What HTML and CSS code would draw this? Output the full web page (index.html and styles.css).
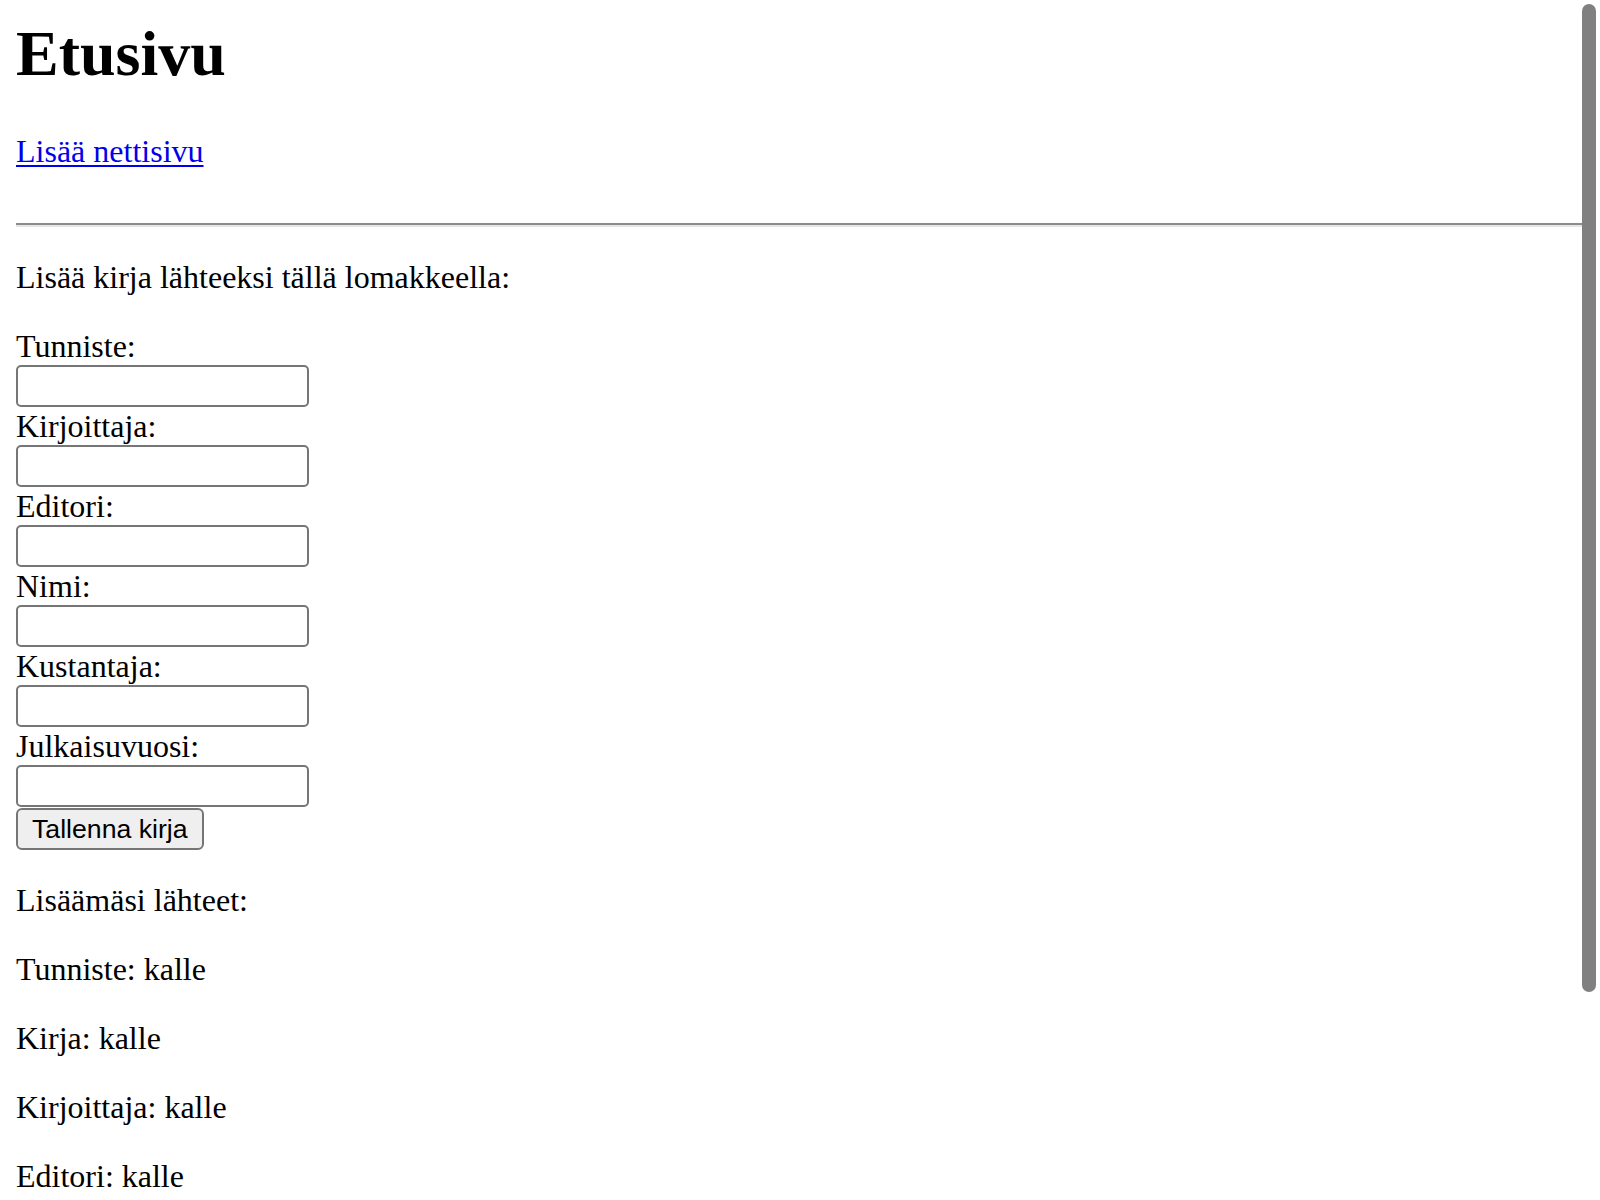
FILE: index.html
```html
<!DOCTYPE html>
<html lang="fi">
<head>
<meta charset="utf-8">
<title>Etusivu</title>
<link rel="stylesheet" href="styles.css">
</head>
<body>
<h1 class="title">Etusivu</h1>
<div class="nav">
  <a class="link" href="#">Lisää nettisivu</a>
  <div class="blank"></div>
</div>
<hr class="rule">
<p class="text">Lisää kirja lähteeksi tällä lomakkeella:</p>
<form class="form">
  <label class="label" for="f1">Tunniste:</label>
  <input class="field" id="f1" type="text">
  <label class="label" for="f2">Kirjoittaja:</label>
  <input class="field" id="f2" type="text">
  <label class="label" for="f3">Editori:</label>
  <input class="field" id="f3" type="text">
  <label class="label" for="f4">Nimi:</label>
  <input class="field" id="f4" type="text">
  <label class="label" for="f5">Kustantaja:</label>
  <input class="field" id="f5" type="text">
  <label class="label" for="f6">Julkaisuvuosi:</label>
  <input class="field" id="f6" type="text">
  <button class="btn" type="button">Tallenna kirja</button>
</form>
<p class="text">Lisäämäsi lähteet:</p>
<p class="text">Tunniste: kalle</p>
<p class="text">Kirja: kalle</p>
<p class="text">Kirjoittaja: kalle</p>
<p class="text">Editori: kalle</p>
<div class="scrollthumb"></div>
</body>
</html>
```
FILE: styles.css
```css
html {
  overflow: hidden;
  background: #fff;
}
body {
  margin: 16.5px 16px 16px 16px;
  font-family: "Liberation Serif", "Times New Roman", serif;
  font-size: 32px;
  color: #000;
}
.title {
  font-size: 64px;
  font-weight: bold;
  margin: 0 0 42.88px 0;
}
.nav {
  display: flex;
  flex-direction: column;
  align-items: flex-start;
}
.link {
  color: #0000ee;
  text-decoration: underline;
  text-decoration-thickness: 2px;
  text-underline-offset: 3px;
}
.blank {
  height: 36.8px;
}
.rule {
  margin: 16px 0;
  border: 0;
  border-top: 2px solid #8c8c8c;
  border-bottom: 2px solid #e6e6e6;
  height: 0;
}
.text {
  margin: 32px 0;
}
.form {
  display: flex;
  flex-direction: column;
  align-items: flex-start;
  margin: 0;
}
.label {
  display: block;
}
.field {
  display: block;
  box-sizing: border-box;
  width: 293px;
  height: 42px;
  margin: 0 0 1px 0;
  border: 2px solid #767676;
  border-radius: 5px;
  background: #fff;
  padding: 2px 4px;
  font-size: 26px;
}
.btn {
  box-sizing: border-box;
  height: 42px;
  margin: 0;
  padding: 0 14px;
  border: 2px solid #767676;
  border-radius: 6px;
  background: #efefef;
  font-family: "Liberation Sans", Arial, sans-serif;
  font-size: 26.67px;
  color: #000;
}
.scrollthumb {
  position: fixed;
  top: 4px;
  right: 4px;
  width: 14px;
  height: 988px;
  border-radius: 7px;
  background: #808080;
}
```
